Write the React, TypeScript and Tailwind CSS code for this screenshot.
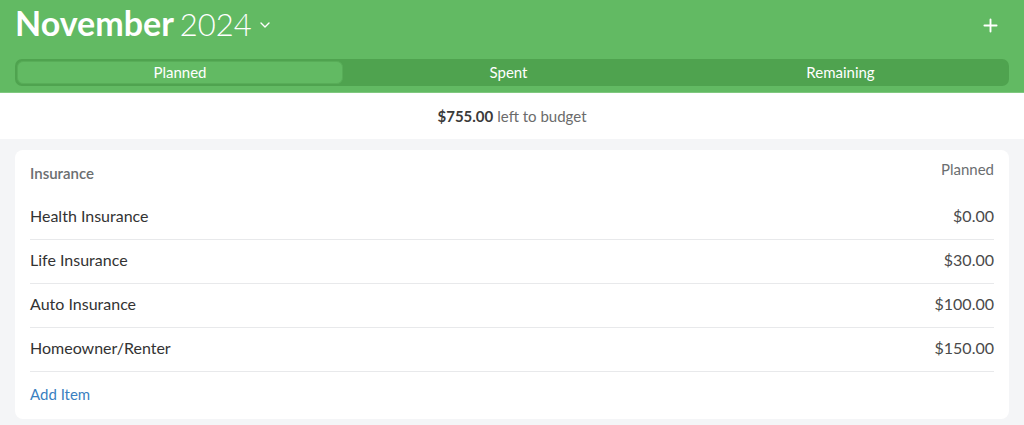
import React from "react";

const rows = [
  { name: "Health Insurance", amt: "$0.00" },
  { name: "Life Insurance", amt: "$30.00" },
  { name: "Auto Insurance", amt: "$100.00" },
  { name: "Homeowner/Renter", amt: "$150.00" },
];

export default function App() {
  return (
    <div className="w-[1024px] h-[425px] bg-[#f4f5f7] overflow-hidden" style={{ fontFamily: "Lato, 'Noto Sans', sans-serif" }}>
      <div className="bg-[#62ba63] px-[15px] pt-[3px] h-[93px] border-b border-[#7fc87f]">
        <div className="flex items-center justify-between h-[40px]">
          <div className="flex items-baseline text-white">
            <span className="text-[34px] font-bold leading-none">November</span>
            <span className="text-[31px] font-light leading-none ml-[6px]">2024</span>
            <svg className="ml-[7px] self-center mt-[4px]" width="12" height="8" viewBox="0 0 12 8" fill="none">
              <path d="M2 2l4 4 4-4" stroke="white" strokeWidth="1.4" strokeLinecap="round" strokeLinejoin="round" />
            </svg>
          </div>
          <svg className="mr-[11px] mt-[4px]" width="15" height="15" viewBox="0 0 16 16">
            <path d="M8 1.5v13M1.5 8h13" stroke="white" strokeWidth="2" strokeLinecap="round" />
          </svg>
        </div>
        <div className="mt-[16px] h-[27px] rounded-[7px] bg-[#4fa34f] flex p-[2px] text-[15px] text-white">
          <div className="w-[326px] rounded-[6px] bg-[#62ba63] border border-[#58ad58] flex items-center justify-center">Planned</div>
          <div className="flex-1 flex items-center justify-center">Spent</div>
          <div className="w-[333px] flex items-center justify-center">Remaining</div>
        </div>
      </div>
      <div className="bg-white h-[46px] flex items-center justify-center text-[15px] pt-[1px]">
        <span className="font-bold text-[#3a3a3a]">$755.00</span>
        <span className="ml-[4px] text-[#6b6b6b]">left to budget</span>
      </div>
      <div className="mx-[15px] mt-[11px] bg-white rounded-[8px] px-[15px]">
        <div className="h-[46px] flex justify-between text-[15px] text-[#6b6e70]">
          <span className="pt-[12px] font-semibold">Insurance</span>
          <span className="pt-[8px]">Planned</span>
        </div>
        {rows.map((r) => (
          <div key={r.name} className="h-[44px] flex items-center justify-between border-b border-[#e8e9eb] text-[16px] text-[#333] pb-[3px]">
            <span>{r.name}</span>
            <span className="text-[#4a4a4a]">{r.amt}</span>
          </div>
        ))}
        <div className="h-[47px] flex items-center text-[15px] text-[#3a7fc1] pb-[3px]">Add Item</div>
      </div>
    </div>
  );
}
